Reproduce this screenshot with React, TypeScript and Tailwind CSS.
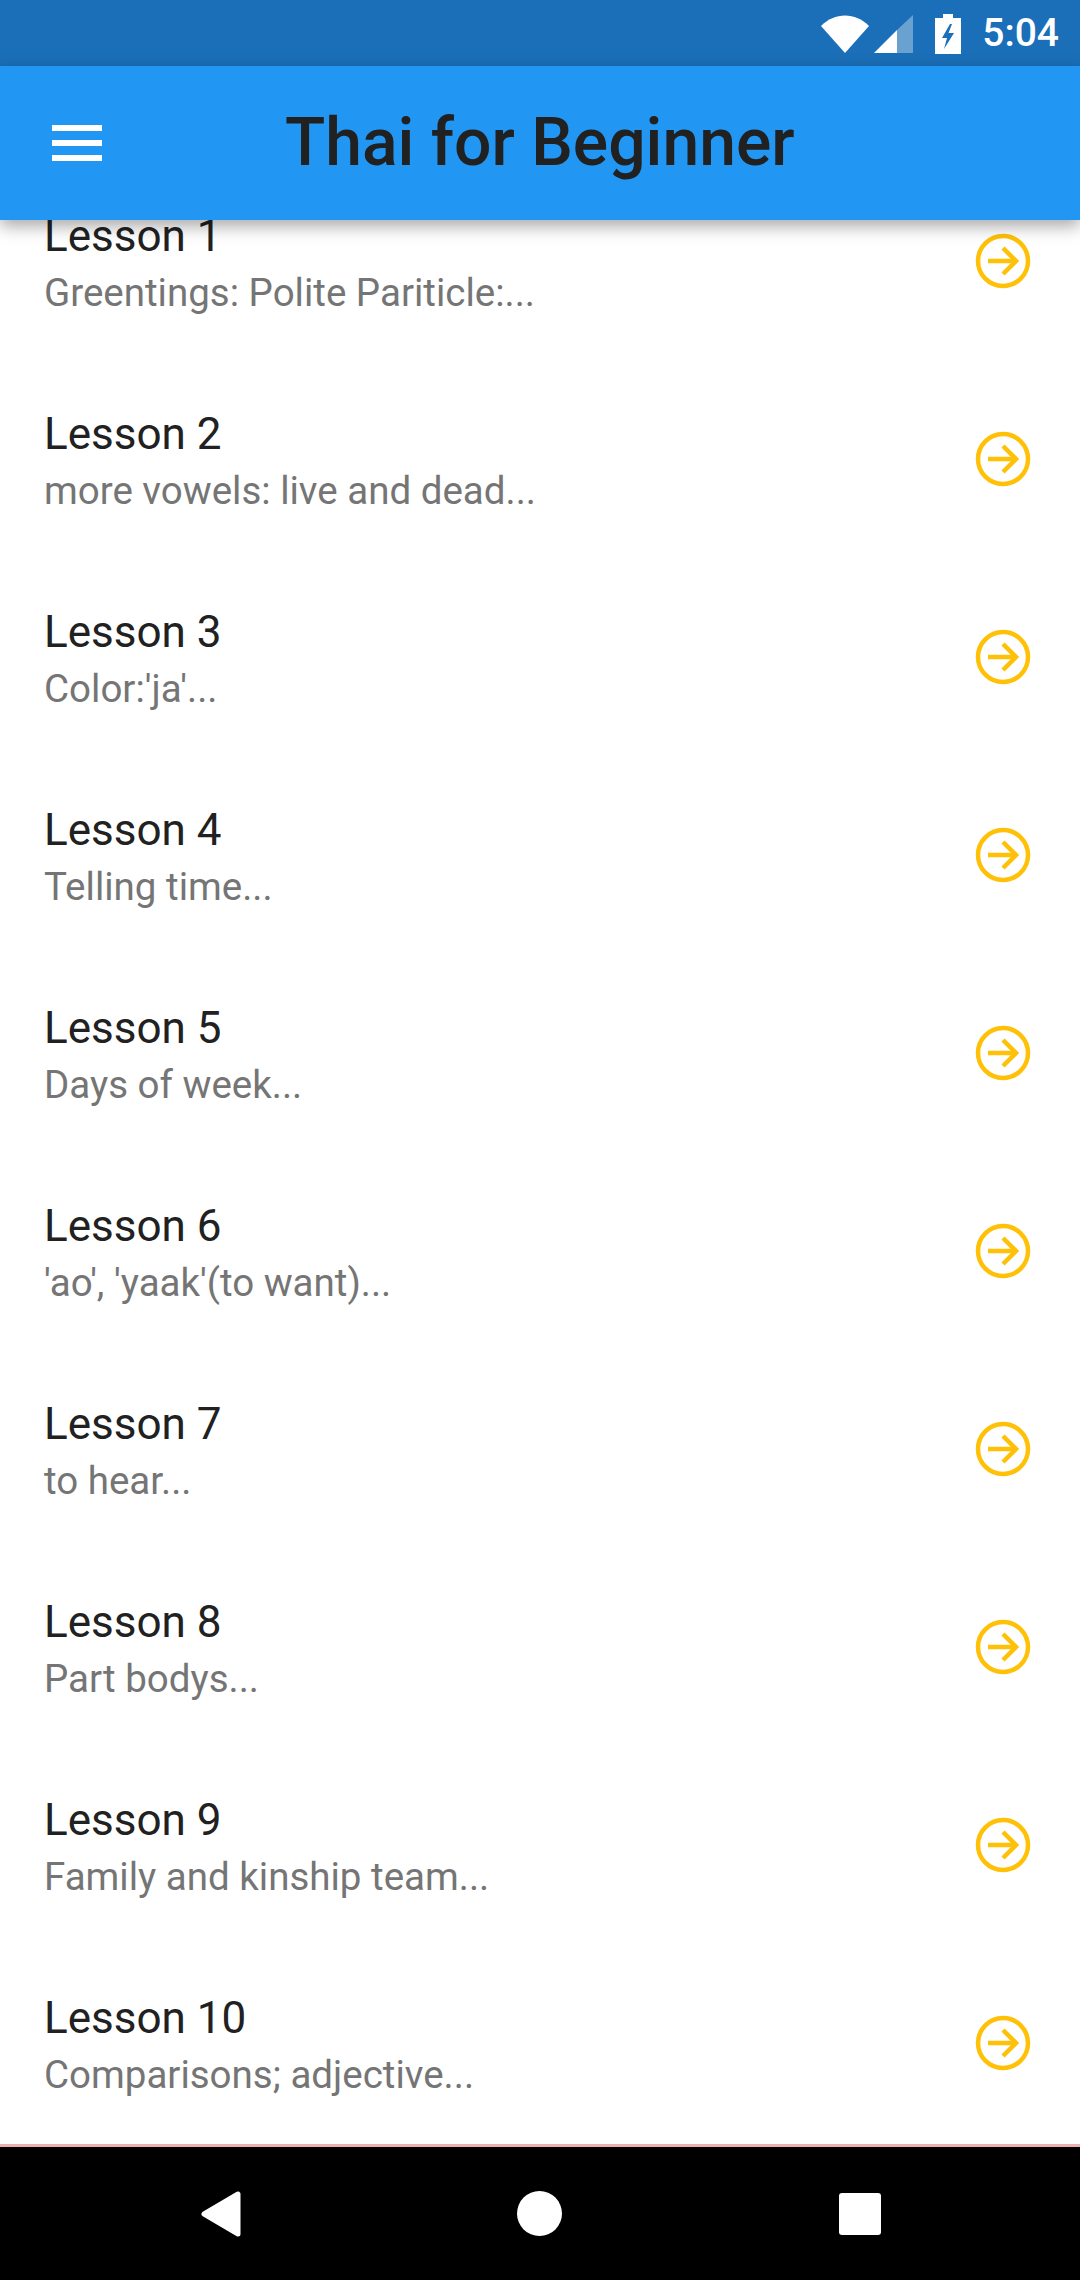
import React from "react";

const lessons = [
  { title: "Lesson 1", sub: "Greentings: Polite Pariticle:..." },
  { title: "Lesson 2", sub: "more vowels: live and dead..." },
  { title: "Lesson 3", sub: "Color:'ja'..." },
  { title: "Lesson 4", sub: "Telling time..." },
  { title: "Lesson 5", sub: "Days of week..." },
  { title: "Lesson 6", sub: "'ao', 'yaak'(to want)..." },
  { title: "Lesson 7", sub: "to hear..." },
  { title: "Lesson 8", sub: "Part bodys..." },
  { title: "Lesson 9", sub: "Family and kinship team..." },
  { title: "Lesson 10", sub: "Comparisons; adjective..." },
];

const StatusBar = () => (
  <div className="flex h-[66px] shrink-0 items-center justify-end bg-[#1a6fb8] pr-[21px] text-white">
    <svg width="48" height="38" viewBox="0 0 48 38" className="mt-[1px]">
      <path d="M0 11 C13.500 -3 34.500 -3 48 11 L24 38 Z" fill="#ffffff" />
    </svg>
    <svg width="39" height="38" viewBox="0 0 39 38" className="ml-[5px] mt-[1px]">
      <path d="M0 38 L23 15 V38 Z" fill="#ffffff" />
      <path d="M23 15 L39 0 V38 H23 Z" fill="#ffffff" fillOpacity="0.35" />
    </svg>
    <svg width="26" height="40" viewBox="0 0 26 40" className="ml-[22px] mt-[1px]">
      <path
        d="M8 0 H18 V4 H26 V40 H0 V4 H8 Z M15 10 L7 24 H12 L9 35 L19 19 H13.500 L17 10 Z"
        fill="#ffffff"
        fillRule="evenodd"
      />
    </svg>
    <span className="ml-[21px] text-[39px] leading-none font-medium">5:04</span>
  </div>
);

const AppBar = () => (
  <header className="relative z-10 flex h-[154px] shrink-0 items-center bg-[#2196f3] pl-[52px] shadow-[0_6px_16px_rgba(0,0,0,0.35)]">
    <div className="flex w-[50px] flex-col gap-[9px]">
      <div className="h-[6px] bg-white" />
      <div className="h-[6px] bg-white" />
      <div className="h-[6px] bg-white" />
    </div>
    <h1 className="ml-[183px] text-[66px] leading-none font-medium text-[#212121]">
      Thai for Beginner
    </h1>
  </header>
);

const ArrowCircle = () => (
  <svg width="60" height="60" viewBox="0 0 60 60" fill="none" stroke="#ffc107" strokeWidth="4.500">
    <circle cx="30" cy="30" r="25" />
    <path d="M15 30 H43" />
    <path d="M30 17 L43 30 L30 43" />
  </svg>
);

const LessonRow = ({ title, sub }: { title: string; sub: string }) => (
  <div className="flex h-[198px] shrink-0 items-center justify-between pl-[44px] pr-[47px]">
    <div className="flex flex-col pt-[3px]">
      <span className="text-[44px] leading-[56px] text-[#212121]">{title}</span>
      <span className="mt-[5px] text-[38.500px] leading-[48px] text-[#757575]">{sub}</span>
    </div>
    <ArrowCircle />
  </div>
);

const NavBar = () => (
  <div className="flex h-[133px] shrink-0 items-center bg-black pl-[201px]">
    <svg width="40" height="46" viewBox="0 0 40 46">
      <path d="M37 3 V43 L3 23 Z" fill="#ffffff" stroke="#ffffff" strokeWidth="5" strokeLinejoin="round" />
    </svg>
    <div className="ml-[276px] h-[45px] w-[45px] rounded-full bg-white" />
    <div className="ml-[277px] h-[42px] w-[42px] rounded-[3px] bg-white" />
  </div>
);

export default function App() {
  return (
    <div className="flex h-[2280px] w-[1080px] flex-col overflow-hidden bg-white font-['Roboto',sans-serif]">
      <StatusBar />
      <AppBar />
      <main className="flex min-h-0 flex-1 flex-col overflow-hidden border-b-[3px] border-[#eeb0b0]">
        <div className="-mt-[58px] flex flex-col">
          {lessons.map((lesson) => (
            <LessonRow key={lesson.title} title={lesson.title} sub={lesson.sub} />
          ))}
        </div>
      </main>
      <NavBar />
    </div>
  );
}
